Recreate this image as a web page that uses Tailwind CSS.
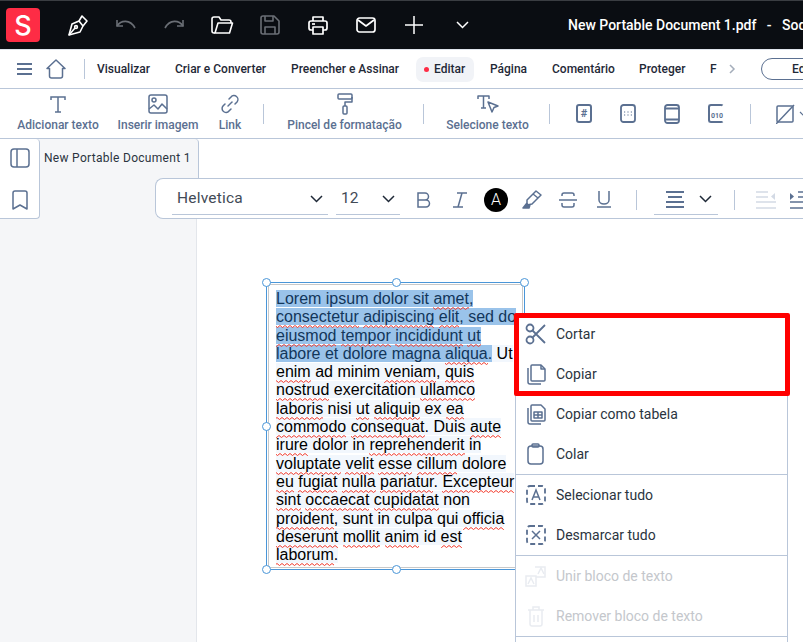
<!DOCTYPE html>
<html lang="en">
<head>
    <meta charset="UTF-8">
    <title>New Portable Document 1.pdf</title>
    <script src="https://cdn.jsdelivr.net/npm/@tailwindcss/browser@4"></script>
</head>
<body class="w-[803px] h-[642px] overflow-hidden bg-white font-['Roboto',sans-serif]">

    <!-- Title bar -->
    <div class="h-[50px] bg-[#0a0d12] border-t border-[#3a3d42] border-b border-b-[#dfe4ec] flex items-center text-white *:shrink-0">
        <div class="ml-[6px] w-[34px] h-[34px] rounded-[4px] bg-[#fe2c45] flex items-center justify-center text-[27px] font-medium font-['Inter',sans-serif] leading-none">S</div>
        <div class="ml-[14px] flex items-center *:shrink-0">
            <div class="w-[48px] flex justify-center"><svg width="22" height="24" viewBox="0 0 22 24" fill="none" stroke="#fff" stroke-width="1.6" stroke-linejoin="round"><path d="M2 22l3-11 7-3 4 5-3 6z"/><path d="M2 22l6-7"/><circle cx="9" cy="14" r="1.4"/><path d="M12 8l3-5 5 5-4 5"/></svg></div>
            <div class="w-[48px] flex justify-center"><svg width="22" height="14" viewBox="0 0 22 14" fill="none" stroke="#6a6e75" stroke-width="1.6"><path d="M2 2v6h6"/><path d="M2 8c4-6 13-7 18 2"/></svg></div>
            <div class="w-[48px] flex justify-center"><svg width="22" height="14" viewBox="0 0 22 14" fill="none" stroke="#6a6e75" stroke-width="1.6"><path d="M20 2v6h-6"/><path d="M20 8C16 2 7 1 2 10"/></svg></div>
            <div class="w-[48px] flex justify-center"><svg width="23" height="18" viewBox="0 0 23 18" fill="none" stroke="#fff" stroke-width="1.6" stroke-linejoin="round"><path d="M4 17H3a2 2 0 0 1-2-2V3a2 2 0 0 1 2-2h5l2 3h8a2 2 0 0 1 2 2v1"/><path d="M4 17l3-10h14.500l-3 10z"/></svg></div>
            <div class="w-[48px] flex justify-center"><svg width="20" height="20" viewBox="0 0 20 20" fill="none" stroke="#6a6e75" stroke-width="1.6" stroke-linejoin="round"><path d="M3 1h11l5 5v11a2 2 0 0 1-2 2H3a2 2 0 0 1-2-2V3a2 2 0 0 1 2-2z"/><path d="M5 1v5h8V1"/><path d="M5 19v-7h10v7"/></svg></div>
            <div class="w-[48px] flex justify-center"><svg width="20" height="19" viewBox="0 0 20 19" fill="none" stroke="#fff" stroke-width="1.7" stroke-linejoin="round"><path d="M5 5V1h10v4"/><path d="M5 14H3a2 2 0 0 1-2-2V7a2 2 0 0 1 2-2h14a2 2 0 0 1 2 2v5a2 2 0 0 1-2 2h-2"/><path d="M5 11h10v7H5z"/><path d="M4 8h3"/></svg></div>
            <div class="w-[48px] flex justify-center"><svg width="20" height="16" viewBox="0 0 20 16" fill="none" stroke="#fff" stroke-width="1.7" stroke-linejoin="round"><rect x="1" y="1" width="18" height="14" rx="2.500"/><path d="M2 3l8 6 8-6"/></svg></div>
            <div class="w-[48px] flex justify-center"><svg width="18" height="18" viewBox="0 0 18 18" fill="none" stroke="#fff" stroke-width="1.5"><path d="M9 0v18M0 9h18"/></svg></div>
            <div class="w-[48px] flex justify-center"><svg width="13" height="8" viewBox="0 0 13 8" fill="none" stroke="#fff" stroke-width="1.5"><path d="M1 1l5.500 5.500L12 1"/></svg></div>
        </div>
        <div class="ml-[82px] text-[14px] font-medium whitespace-pre leading-none">New Portable Document 1.pdf   -   Soda PDF</div>
    </div>

    <!-- Menu tabs -->
    <div class="h-[39px] border-b border-[#b9c6d9] flex items-center text-[12px] font-medium text-[#1f2937] whitespace-nowrap *:shrink-0">
        <div class="ml-[17px] w-[15px] flex flex-col gap-[3.500px]">
            <div class="h-[1.500px] bg-[#5b7091]"></div>
            <div class="h-[1.500px] bg-[#5b7091]"></div>
            <div class="h-[1.500px] bg-[#5b7091]"></div>
        </div>
        <svg class="ml-[14px]" width="20" height="20" viewBox="0 0 20 20" fill="none" stroke="#5b7091" stroke-width="1.500" stroke-linejoin="round"><path d="M1 9.500L10 1l9 8.500h-2.500V17a2 2 0 0 1-2 2h-9a2 2 0 0 1-2-2V9.500z"/></svg>
        <div class="ml-[18px] w-px h-[20px] bg-[#b9c6d9]"></div>
        <div class="ml-[12px] w-[78px]">Visualizar</div>
        <div class="w-[116px]">Criar e Converter</div>
        <div class="w-[125px]">Preencher e Assinar</div>
        <div class="w-[58px] h-[25px] bg-[#f1f3f7] rounded-[7px] flex items-center pl-[8px] gap-[5px]"><span class="w-[5px] h-[5px] rounded-full bg-[#fe2c45]"></span>Editar</div>
        <div class="ml-[16px] w-[62px]">Página</div>
        <div class="w-[87px]">Comentário</div>
        <div class="w-[71px]">Proteger</div>
        <div class="w-[19px]">F</div>
        <svg width="7" height="10" viewBox="0 0 7 10" fill="none" stroke="#a4adba" stroke-width="1.500"><path d="M1 1l4 4-4 4"/></svg>
        <div class="ml-[25px] w-[60px] h-[22px] border border-[#5b7091] rounded-full pl-[30px] leading-[20px]">Edit</div>
    </div>

    <!-- Edit ribbon -->
    <div class="h-[50px] border-b border-[#b9c6d9] flex items-center text-[12px] font-medium text-[#5b7091] whitespace-nowrap *:shrink-0">
        <div class="w-[116px] flex flex-col items-center gap-[1px]">
            <svg class="h-[22px]" width="18" height="22" viewBox="0 0 18 22" fill="none" stroke="#5b7091" stroke-width="1.500"><path d="M2 7V4h14v3"/><path d="M9 4v15"/><path d="M6 19h6"/></svg>
            <span>Adicionar texto</span>
        </div>
        <div class="w-[84px] flex flex-col items-center gap-[1px]">
            <svg class="h-[22px]" width="20" height="20" viewBox="0 0 20 20" fill="none" stroke="#5b7091" stroke-width="1.500" stroke-linejoin="round"><rect x="1" y="1" width="18" height="18" rx="2"/><circle cx="6" cy="6" r="2"/><path d="M1 15l5-4 4 4 4-5 5 5"/></svg>
            <span>Inserir imagem</span>
        </div>
        <div class="w-[60px] flex flex-col items-center gap-[1px]">
            <svg class="h-[22px]" width="18" height="18" viewBox="0 0 18 18" fill="none" stroke="#5b7091" stroke-width="1.500" stroke-linecap="round"><path d="M7 11l4-4"/><path d="M8 4l2-2a3.500 3.500 0 0 1 6 5l-2 2"/><path d="M10 14l-2 2a3.500 3.500 0 0 1-6-5l2-2"/></svg>
            <span>Link</span>
        </div>
        <div class="ml-[3px] w-px h-[20px] bg-[#b9c6d9]"></div>
        <div class="w-[159px] pl-[2px] flex flex-col items-center gap-[1px]">
            <svg class="h-[22px]" width="16" height="22" viewBox="0 0 16 22" fill="none" stroke="#5b7091" stroke-width="1.500" stroke-linejoin="round"><rect x="1" y="1" width="14" height="5" rx="1"/><path d="M15 4v5H8v4"/><rect x="6" y="13" width="4" height="8" rx="1"/></svg>
            <span>Pincel de formatação</span>
        </div>
        <div class="w-px h-[20px] bg-[#b9c6d9]"></div>
        <div class="w-[125px] pl-[2px] flex flex-col items-center gap-[1px]">
            <svg class="h-[22px]" width="22" height="18" viewBox="0 0 22 18" fill="none" stroke="#5b7091" stroke-width="1.500" stroke-linejoin="round"><path d="M1 4V1h11v3"/><path d="M6.500 1v12"/><path d="M4 13h5"/><path d="M11 7l10 4-4 1.500-2 4.500z"/></svg>
            <span>Selecione texto</span>
        </div>
        <div class="w-px h-[20px] bg-[#b9c6d9]"></div>
        <div class="ml-[12px] w-[44px] flex justify-center"><div class="w-[16px] h-[19px] border-2 border-[#5b7091] rounded-[3px] flex items-center justify-center text-[11px] font-bold leading-none">#</div></div>
        <div class="w-[44px] flex justify-center"><svg width="16" height="19" viewBox="0 0 16 19" fill="none" stroke="#5b7091"><rect x="1" y="1" width="14" height="17" rx="2.500" stroke-width="1.800"/><path d="M4 8h1.200M7.400 8h1.200M10.800 8h1.200M4 11h1.200M7.400 11h1.200M10.800 11h1.200" stroke-width="1.200"/></svg></div>
        <div class="w-[44px] flex justify-center"><svg width="16" height="20" viewBox="0 0 16 20" fill="none" stroke="#5b7091" stroke-width="1.800"><rect x="1" y="1" width="14" height="18" rx="2.500"/><path d="M1 4.500h14M1 15.500h14"/></svg></div>
        <div class="w-[44px] flex justify-center"><div class="relative w-[16px] h-[19px] border-2 border-[#5b7091] rounded-[3px] border-r-transparent"><span class="absolute left-[1px] top-[7px] text-[7px] font-bold leading-none">010</span></div></div>
        <div class="ml-[12px] w-px h-[20px] bg-[#b9c6d9]"></div>
        <div class="ml-[25px]"><svg width="19" height="20" viewBox="0 0 19 20" fill="none" stroke="#5b7091" stroke-width="1.500"><rect x="1" y="2" width="16" height="16" rx="1"/><path d="M0 20L18 1"/></svg></div>
        <svg class="ml-[4px]" width="9" height="6" viewBox="0 0 9 6" fill="none" stroke="#5b7091" stroke-width="1.200"><path d="M1 1l3.500 3.500L8 1"/></svg>
    </div>

    <!-- Workspace -->
    <div class="relative flex h-[503px]">
        <div class="w-[197px] shrink-0 h-full bg-[#f5f6f8] border-r border-[#e3e6eb]">
            <div class="ml-[40px] h-[40px] flex items-center pl-[4px] pb-[2px] text-[12px] tracking-[0.3px] text-[#2b3440] whitespace-nowrap bg-[#f5f6f8] border-r border-[#b9c6d9] w-[159px] rounded-tr-[4px]">New Portable Document 1</div>
        </div>
        <div class="flex-1">
            <!-- Text block on the page -->
            <div class="mt-[151px] ml-[79px] text-[16px] leading-[18.3px] text-black font-['Liberation_Sans',sans-serif] whitespace-nowrap [&_span]:bg-[#f2f7fd] [&_u]:no-underline [&_u]:relative [&_u]:pb-[3px] [&_u]:bg-repeat-x [&_u]:bg-bottom [&_u]:bg-[url('data:image/svg+xml,%3Csvg%20xmlns=%22http://www.w3.org/2000/svg%22%20width=%225%22%20height=%223%22%3E%3Cpath%20d=%22M0%20.5L2.5%202.5L5%20.5%22%20fill=%22none%22%20stroke=%22%23f2392b%22/%3E%3C/svg%3E')] [&_b]:font-normal [&_b]:bg-[#9ac3ea] [&_b]:text-[#12365a]">
                <div class="h-[18.3px]"><b>Lorem ipsum dolor sit <u>amet</u>,</b></div>
                <div class="h-[18.3px]"><b><u>consectetur</u> <u>adipiscing</u> <u>elit</u>, sed do</b></div>
                <div class="h-[18.3px]"><b><u>eiusmod</u> <u>tempor</u> <u>incididunt</u> <u>ut</u></b></div>
                <div class="h-[18.3px]"><b>labore et dolore magna <u>aliqua</u>.</b><span> Ut</span></div>
                <div class="h-[18.3px]"><span><u>enim</u> ad minim <u>veniam</u>, <u>quis</u></span></div>
                <div class="h-[18.3px]"><span><u>nostrud</u> exercitation <u>ullamco</u></span></div>
                <div class="h-[18.3px]"><span><u>laboris</u> nisi <u>ut</u> <u>aliquip</u> ex <u>ea</u></span></div>
                <div class="h-[18.3px]"><span><u>commodo</u> <u>consequat</u>. Duis <u>aute</u></span></div>
                <div class="h-[18.3px]"><span><u>irure</u> dolor in <u>reprehenderit</u> in</span></div>
                <div class="h-[18.3px]"><span><u>voluptate</u> <u>velit</u> <u>esse</u> <u>cillum</u> dolore</span></div>
                <div class="h-[18.3px]"><span><u>eu</u> <u>fugiat</u> <u>nulla</u> <u>pariatur</u>. <u>Excepteur</u></span></div>
                <div class="h-[18.3px]"><span><u>sint</u> <u>occaecat</u> <u>cupidatat</u> non</span></div>
                <div class="h-[18.3px]"><span><u>proident</u>, sunt in culpa qui <u>officia</u></span></div>
                <div class="h-[18.3px]"><span><u>deserunt</u> <u>mollit</u> <u>anim</u> id <u>est</u></span></div>
                <div class="h-[18.3px]"><span><u>laborum</u>.</span></div>
            </div>
        </div>

        <!-- Left rail -->
        <div class="absolute left-0 top-0 w-[40px] h-[80px] bg-white border-r border-b border-[#b9c6d9] rounded-r-[4px] flex flex-col items-center pt-[9px] gap-[22px]">
            <svg width="20" height="20" viewBox="0 0 20 20" fill="none" stroke="#5b7091" stroke-width="1.500"><rect x="1" y="1" width="18" height="18" rx="3"/><path d="M7 1v18"/></svg>
            <svg width="16" height="20" viewBox="0 0 16 20" fill="none" stroke="#5b7091" stroke-width="1.500" stroke-linejoin="round"><path d="M1 3a2 2 0 0 1 2-2h10a2 2 0 0 1 2 2v16l-7-4-7 4z"/></svg>
        </div>

        <!-- Floating format bar -->
        <div class="absolute left-[155px] top-[39px] right-0 h-[41px] pt-[2px] bg-white border-t border-l border-b border-[#b9c6d9] rounded-l-[8px] flex items-center text-[#424a56] *:shrink-0">
            <div class="ml-[16px] w-[156px] h-[31px] border-b border-[#b9c6d9] flex items-center justify-between pl-[5px] pr-[5px] text-[15.500px] tracking-[0.2px]">Helvetica
                <svg width="13" height="8" viewBox="0 0 13 8" fill="none" stroke="#1f2937" stroke-width="1.500"><path d="M1 1l5.500 5.500L12 1"/></svg>
            </div>
            <div class="ml-[8px] w-[64px] h-[31px] border-b border-[#b9c6d9] flex items-center justify-between pl-[5px] pr-[5px] text-[15.500px]">12
                <svg width="13" height="8" viewBox="0 0 13 8" fill="none" stroke="#1f2937" stroke-width="1.500"><path d="M1 1l5.500 5.500L12 1"/></svg>
            </div>
            <div class="ml-[6px] flex items-center *:shrink-0">
                <div class="w-[36px] flex justify-center"><svg width="14" height="16" viewBox="0 0 14 16" fill="none" stroke="#5b7091" stroke-width="1.500"><path d="M1 1h7a3.500 3.500 0 0 1 0 7H1zM1 8h8a3.500 3.500 0 0 1 0 7H1z"/></svg></div>
                <div class="w-[36px] flex justify-center"><svg width="14" height="16" viewBox="0 0 14 16" fill="none" stroke="#5b7091" stroke-width="1.500"><path d="M4 1h10M0 15h10M9 1L5 15"/></svg></div>
                <div class="w-[36px] flex justify-center"><div class="w-[24px] h-[24px] rounded-full bg-black text-white flex items-center justify-center text-[16px] leading-none font-light">A</div></div>
                <div class="w-[36px] flex justify-center"><svg width="20" height="19" viewBox="0 0 20 19" fill="none" stroke="#5b7091" stroke-width="1.500" stroke-linejoin="round"><path d="M5 10l9-9 5 4-9 9-5 1z"/><path d="M11 4l5 4"/><path d="M5 13l-4 5h6l1-3" fill="#5b7091"/></svg></div>
                <div class="w-[36px] flex justify-center"><svg width="18" height="16" viewBox="0 0 18 16" fill="none" stroke="#5b7091" stroke-width="1.500"><path d="M0 8h18"/><path d="M15 4V3a2 2 0 0 0-2-2H5a2 2 0 0 0-2 2v1"/><path d="M3 11v2a2 2 0 0 0 2 2h8a2 2 0 0 0 2-2v-2"/></svg></div>
                <div class="w-[36px] flex justify-center"><svg width="14" height="17" viewBox="0 0 14 17" fill="none" stroke="#5b7091" stroke-width="1.500"><path d="M2 0v9a5 4 0 0 0 10 0V0"/><path d="M0 16h14"/></svg></div>
            </div>
            <div class="ml-[14px] w-px h-[20px] bg-[#b9c6d9]"></div>
            <div class="ml-[17px] w-[64px] h-[31px] border-b border-[#b9c6d9] flex items-center pl-[12px] gap-[15px]">
                <svg width="18" height="17" viewBox="0 0 18 17" fill="none" stroke="#5b7091" stroke-width="1.800"><path d="M0 1h18M2 6h14M0 11h18M0 16h18"/></svg>
                <svg width="13" height="8" viewBox="0 0 13 8" fill="none" stroke="#1f2937" stroke-width="1.500"><path d="M1 1l5.500 5.500L12 1"/></svg>
            </div>
            <div class="ml-[16px] w-px h-[20px] bg-[#b9c6d9]"></div>
            <svg class="ml-[21px]" width="20" height="18" viewBox="0 0 20 18" fill="none" stroke="#d3dae5" stroke-width="1.500"><path d="M0 1h12M0 6h12M0 11h20M0 17h20"/><path d="M19 2v7l-4-3.500z" fill="#d3dae5" stroke="none"/></svg>
            <svg class="ml-[14px]" width="20" height="18" viewBox="0 0 20 18" fill="none" stroke="#5b7091" stroke-width="1.500"><path d="M8 1h12M8 6h12M0 11h20M0 17h20"/><path d="M0 2v7l4-3.500z" fill="#5b7091" stroke="none"/></svg>
        </div>

        <!-- Selection frame -->
        <div class="absolute left-[266px] top-[143px] w-[259px] h-[288px] border border-[#4a96d8] pointer-events-none">
            <div class="absolute inset-[1px] border border-[#c9c9c9]"></div>
            <div class="absolute -left-[5px] -top-[5px] w-[9px] h-[9px] rounded-full bg-white border border-[#4a96d8]"></div>
            <div class="absolute left-[125px] -top-[5px] w-[9px] h-[9px] rounded-full bg-white border border-[#4a96d8]"></div>
            <div class="absolute -right-[5px] -top-[5px] w-[9px] h-[9px] rounded-full bg-white border border-[#4a96d8]"></div>
            <div class="absolute -left-[5px] top-[139px] w-[9px] h-[9px] rounded-full bg-white border border-[#4a96d8]"></div>
            <div class="absolute -left-[5px] -bottom-[5px] w-[9px] h-[9px] rounded-full bg-white border border-[#4a96d8]"></div>
            <div class="absolute left-[125px] -bottom-[5px] w-[9px] h-[9px] rounded-full bg-white border border-[#4a96d8]"></div>
        </div>

        <!-- Context menu -->
        <div class="absolute left-[515px] top-[175px] w-[273px] bg-white border-x border-[#b9c6d9] text-[14px] text-[#2b3440]">
            <div class="h-[40px] flex items-center pl-[9px] gap-[9px]">
                <svg width="22" height="22" viewBox="0 0 22 22" fill="none" stroke="#5b7091" stroke-width="1.800"><circle cx="5" cy="5" r="3.500"/><circle cx="5" cy="17" r="3.500"/><path d="M7.500 7.500L20 20M7.500 14.500L20 2"/></svg>
                Cortar
            </div>
            <div class="h-[40px] flex items-center pl-[10px] gap-[10px]">
                <svg width="20" height="22" viewBox="0 0 20 22" fill="none" stroke="#5b7091" stroke-width="1.500" stroke-linejoin="round"><path d="M5 3a1 1 0 0 1 1-1h9l4 4v11a1 1 0 0 1-1 1H6a1 1 0 0 1-1-1z"/><path d="M15 2v4h4"/><path d="M2 5v14a2 2 0 0 0 2 2h11"/></svg>
                Copiar
            </div>
            <div class="h-[40px] flex items-center pl-[10px] gap-[10px]">
                <svg width="20" height="22" viewBox="0 0 20 22" fill="none" stroke="#5b7091" stroke-width="1.500" stroke-linejoin="round"><path d="M5 3a1 1 0 0 1 1-1h9l4 4v11a1 1 0 0 1-1 1H6a1 1 0 0 1-1-1z"/><path d="M2 5v14a2 2 0 0 0 2 2h11"/><path d="M8 9h8v6H8zM12 9v6M8 12h8"/></svg>
                Copiar como tabela
            </div>
            <div class="h-[40px] flex items-center pl-[10px] gap-[10px]">
                <svg width="20" height="22" viewBox="0 0 20 22" fill="none" stroke="#5b7091" stroke-width="1.500" stroke-linejoin="round"><rect x="2" y="3" width="15" height="18" rx="3"/><rect x="6" y="1" width="7" height="3" rx="1"/></svg>
                Colar
            </div>
            <div class="border-t border-[#b9c6d9]"></div>
            <div class="h-[40px] flex items-center pl-[9px] gap-[9px]">
                <svg width="22" height="22" viewBox="0 0 22 22" fill="none" stroke="#5b7091" stroke-width="1.800"><rect x="2" y="2" width="18" height="18" rx="3" stroke-dasharray="5 3"/><path d="M7 16l4-10 4 10M8.500 13h5" stroke-width="1.500"/></svg>
                Selecionar tudo
            </div>
            <div class="h-[40px] flex items-center pl-[9px] gap-[9px]">
                <svg width="22" height="22" viewBox="0 0 22 22" fill="none" stroke="#5b7091" stroke-width="1.800"><rect x="2" y="2" width="18" height="18" rx="3" stroke-dasharray="5 3"/><path d="M7 7l8 8M15 7l-8 8" stroke-width="1.500"/></svg>
                Desmarcar tudo
            </div>
            <div class="border-t border-[#b9c6d9]"></div>
            <div class="h-[40px] flex items-center pl-[9px] gap-[9px] text-[#c4c7cc]">
                <svg width="22" height="22" viewBox="0 0 22 22" fill="none" stroke="#e9ecf1" stroke-width="1.500"><path d="M1 11h10v10H1zM10 2h10v10h-9"/><path d="M3 19l3-6 3 6M13 9l3-6 3 6"/></svg>
                Unir bloco de texto
            </div>
            <div class="h-[40px] flex items-center pl-[10px] gap-[10px] text-[#c4c7cc]">
                <svg width="20" height="22" viewBox="0 0 20 22" fill="none" stroke="#e9ecf1" stroke-width="1.500"><path d="M2 5h16M7 5V2h6v3M4 5v14a2 2 0 0 0 2 2h8a2 2 0 0 0 2-2V5M8 10v7M12 10v7"/></svg>
                Remover bloco de texto
            </div>
            <div class="border-t border-[#b9c6d9] h-[6px]"></div>
        </div>

        <!-- Red highlight from the annotated screenshot -->
        <div class="absolute left-[514px] top-[174px] w-[276px] h-[83px] border-[5px] border-[#ff0000] rounded-[2px] pointer-events-none"></div>
    </div>
</body>
</html>
